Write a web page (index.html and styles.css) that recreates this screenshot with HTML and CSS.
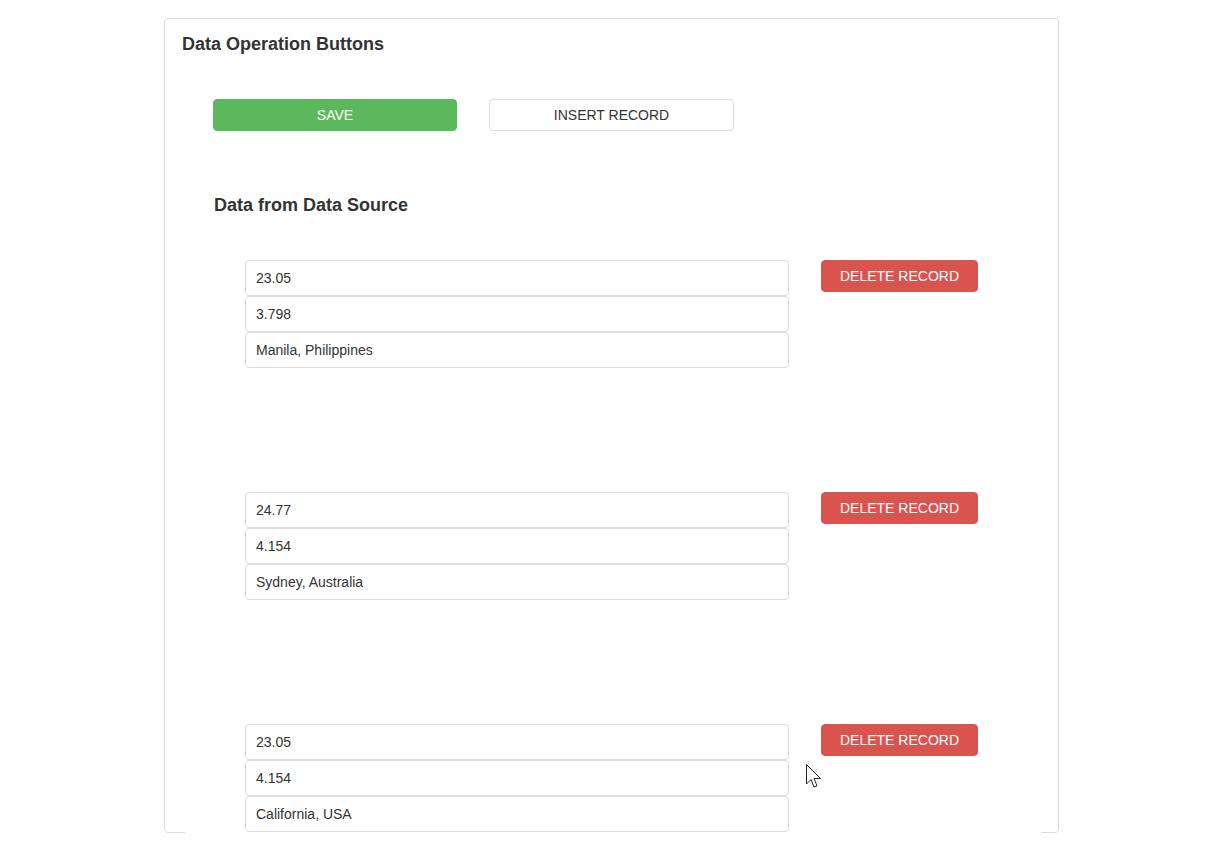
FILE: index.html
```html
<!DOCTYPE html>
<html lang="en">
<head>
<meta charset="utf-8">
<title>Data Operation Buttons</title>
<link rel="stylesheet" href="styles.css">
</head>
<body>
<div class="panel">
  <h3 class="panel-title">Data Operation Buttons</h3>
  <div class="panel-body">
    <div class="btn-row">
      <button class="btn btn-save">SAVE</button>
      <button class="btn btn-insert">INSERT RECORD</button>
    </div>
    <h4 class="section-title">Data from Data Source</h4>
    <div class="records">
      <div class="record">
        <div class="fields">
          <input class="field" type="text" value="23.05">
          <input class="field" type="text" value="3.798">
          <input class="field" type="text" value="Manila, Philippines">
        </div>
        <button class="btn btn-delete">DELETE RECORD</button>
      </div>
      <div class="record">
        <div class="fields">
          <input class="field" type="text" value="24.77">
          <input class="field" type="text" value="4.154">
          <input class="field" type="text" value="Sydney, Australia">
        </div>
        <button class="btn btn-delete">DELETE RECORD</button>
      </div>
      <div class="record">
        <div class="fields">
          <input class="field" type="text" value="23.05">
          <input class="field" type="text" value="4.154">
          <input class="field" type="text" value="California, USA">
        </div>
        <button class="btn btn-delete">DELETE RECORD</button>
      </div>
    </div>
  </div>
  <svg class="cursor" width="20" height="28" viewBox="0 0 20 28">
    <path d="M1.5 1.5 L1.5 21 L6 16.5 L9 24 L12 22.8 L9 15.5 L15.5 15.5 Z" fill="#fff" stroke="#222" stroke-width="1" stroke-linejoin="miter"/>
  </svg>
</div>
</body>
</html>
```

FILE: styles.css
```css
html, body {
  margin: 0;
  padding: 0;
  background: #fff;
}

body {
  font-family: "Liberation Sans", Arial, sans-serif;
  color: #333;
}

.panel {
  position: relative;
  box-sizing: border-box;
  width: 895px;
  height: 815px;
  margin: 18px 0 0 164px;
  border: 1px solid #dcdcdc;
  border-radius: 4px;
}

.panel::after {
  content: "";
  position: absolute;
  left: 20px;
  right: 17px;
  bottom: -1px;
  height: 1px;
  background: #fff;
}

.panel-title {
  margin: 0;
  padding: 15px 17px 0;
  font-size: 18px;
  line-height: 20px;
  font-weight: bold;
  color: #333;
}

.panel-body {
  padding: 45px 0 0 48px;
}

.btn-row {
  display: flex;
  gap: 32px;
}

.btn {
  box-sizing: border-box;
  height: 32px;
  border-radius: 4px;
  font-family: "Liberation Sans", Arial, sans-serif;
  font-size: 14px;
  line-height: 30px;
  padding: 0;
  cursor: pointer;
}

.btn-save {
  width: 244px;
  background: #5cb85c;
  border: 1px solid #5cb85c;
  color: #fff;
}

.btn-insert {
  width: 245px;
  background: #fff;
  border: 1px solid #dcdcdc;
  color: #333;
}

.section-title {
  margin: 64px 0 0 1px;
  font-size: 18px;
  line-height: 20px;
  font-weight: bold;
  color: #333;
}

.records {
  display: flex;
  flex-direction: column;
  gap: 124px;
  padding: 45px 0 0 32px;
}

.record {
  display: flex;
  align-items: flex-start;
  gap: 32px;
}

.fields {
  display: flex;
  flex-direction: column;
  width: 544px;
}

.field {
  box-sizing: border-box;
  width: 544px;
  height: 36px;
  margin: 0;
  padding: 0 10px;
  border: 1px solid #dcdcdc;
  border-radius: 4px;
  font-family: "Liberation Sans", Arial, sans-serif;
  font-size: 14px;
  color: #333;
  background: #fff;
  outline: none;
}

.btn-delete {
  width: 157px;
  background: #d9534f;
  border: 1px solid #d9534f;
  color: #fff;
}

.cursor {
  position: absolute;
  left: 640px;
  top: 744px;
}
```
